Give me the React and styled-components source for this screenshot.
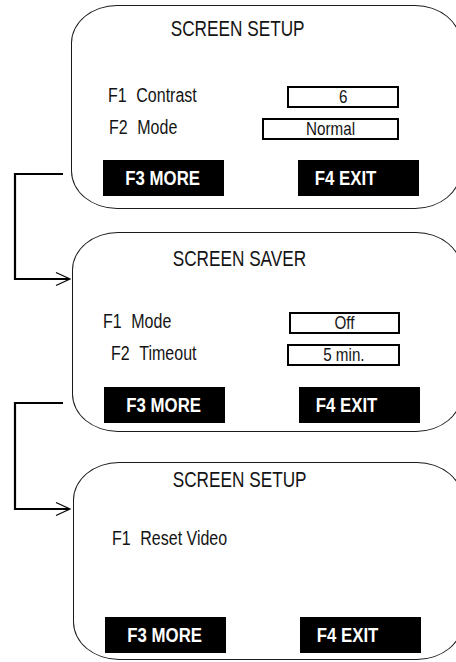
import React from 'react';
import styled, { createGlobalStyle } from 'styled-components';

const GlobalStyle = createGlobalStyle`
  html, body {
    margin: 0;
    padding: 0;
    background: #fff;
    overflow: hidden;
  }
  body {
    font-family: "Liberation Sans", Arial, sans-serif;
    color: #141414;
  }
`;

const screens = [
  {
    title: 'SCREEN SETUP',
    left: 71,
    gap: 0,
    height: 204,
    titleTop: 11,
    rowsTop: 45,
    rows: [
      { key: 'F1', name: 'Contrast', indent: 36, value: '6', width: 112 },
      { key: 'F2', name: 'Mode', indent: 37, value: 'Normal', width: 137 },
    ],
  },
  {
    title: 'SCREEN SAVER',
    left: 72,
    gap: 23,
    height: 200,
    titleTop: 14,
    rowsTop: 41,
    rows: [
      { key: 'F1', name: 'Mode', indent: 30, value: 'Off', width: 111 },
      { key: 'F2', name: 'Timeout', indent: 38, value: '5 min.', width: 113 },
    ],
  },
  {
    title: 'SCREEN SETUP',
    left: 73,
    gap: 30,
    height: 198,
    titleTop: 5,
    rowsTop: 37,
    rows: [{ key: 'F1', name: 'Reset Video', indent: 38 }],
  },
];

const Screen = ({ data }) => (
  <Panel $left={data.left} $gap={data.gap} $h={data.height}>
    <Title $top={data.titleTop}>
      <Narrow>{data.title}</Narrow>
    </Title>
    <Rows $top={data.rowsTop}>
      {data.rows.map((r) => (
        <Row key={r.key}>
          <Label $indent={r.indent}>
            <Narrow $origin="left">
              {r.key}
              <Name>{r.name}</Name>
            </Narrow>
          </Label>
          {r.value && (
            <Value $w={r.width}>
              <Narrow>{r.value}</Narrow>
            </Value>
          )}
        </Row>
      ))}
    </Rows>
    <Buttons>
      <Key>
        <Narrow>F3 MORE</Narrow>
      </Key>
      <Key $shift={24}>
        <Narrow>F4 EXIT</Narrow>
      </Key>
    </Buttons>
  </Panel>
);

const App = () => {
  return (
    <Page>
      <GlobalStyle />
      {screens.map((s, i) => (
        <Screen key={i} data={s} />
      ))}
      <Links viewBox="0 0 80 662" width="80" height="662">
        <path d="M63 174 H15 V279 H69" />
        <path className="head" d="M56 272.5 L70 279 L56 285.5" />
        <path d="M63 403 H15 V509 H69" />
        <path className="head" d="M56 502.5 L70 509 L56 515.5" />
      </Links>
    </Page>
  );
};

const Page = styled.div`
  position: relative;
  width: 456px;
  height: 662px;
  box-sizing: border-box;
  padding-top: 5px;
  display: flex;
  flex-direction: column;
  overflow: hidden;
`;

const Panel = styled.section`
  flex: none;
  box-sizing: border-box;
  width: 390px;
  height: ${(p) => p.$h}px;
  margin-left: ${(p) => p.$left}px;
  margin-top: ${(p) => p.$gap}px;
  padding-bottom: ${(p) => p.$h - 191.5}px;
  border: 1.5px solid #1a1a1a;
  border-radius: 46px / 38px;
  display: flex;
  flex-direction: column;
`;

/* the screens use a condensed face; Arial metrics squeezed to narrow width */
const Narrow = styled.span`
  display: inline-block;
  white-space: nowrap;
  transform: scaleX(0.8);
  transform-origin: ${(p) => p.$origin || 'center'};
`;

const Title = styled.h2`
  margin: ${(p) => p.$top}px 0 0;
  width: 332px;
  text-align: center;
  font-size: 21.5px;
  line-height: 24px;
  font-weight: 400;
`;

const Rows = styled.div`
  margin-top: ${(p) => p.$top}px;
  display: flex;
  flex-direction: column;
  gap: 10px;
`;

const Row = styled.div`
  width: 327px;
  display: flex;
  align-items: flex-start;
`;

const Label = styled.div`
  padding-left: ${(p) => p.$indent}px;
  font-size: 20px;
  line-height: 18px;
  white-space: nowrap;
`;

const Name = styled.span`
  margin-left: 12px;
`;

const Value = styled.div`
  margin-left: auto;
  box-sizing: border-box;
  width: ${(p) => p.$w}px;
  height: 22px;
  border: 2px solid #000;
  font-size: 19px;
  line-height: 18px;
  text-align: center;
`;

const Buttons = styled.div`
  margin-top: auto;
  padding-left: 30.5px;
  display: flex;
  gap: 74px;
`;

const Key = styled.div`
  box-sizing: border-box;
  width: 121px;
  height: 36px;
  padding-right: ${(p) => p.$shift || 0}px;
  background: #000;
  color: #fff;
  font-size: 21px;
  font-weight: 700;
  display: flex;
  align-items: center;
  justify-content: center;
`;

const Links = styled.svg`
  position: absolute;
  left: 0;
  top: 0;
  pointer-events: none;

  path {
    fill: none;
    stroke: #000;
    stroke-width: 2.2;
  }
  path.head {
    stroke-width: 1.2;
  }
`;

export default App;
